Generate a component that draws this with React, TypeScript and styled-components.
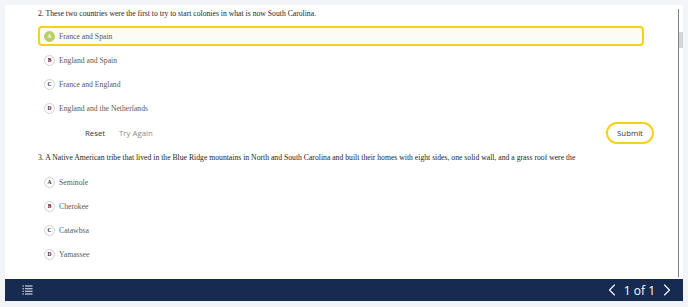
import React, { FC } from 'react';
import styled, { createGlobalStyle } from 'styled-components';
import { ChevronLeft, ChevronRight } from 'lucide-react';

const GlobalStyle = createGlobalStyle`
  html, body {
    margin: 0;
    padding: 0;
    background: #f3f4f7;
  }
`;

const Page = styled.div`
  width: 688px;
  height: 307px;
  box-sizing: border-box;
  padding: 5px 5px 6px 5px;
  display: flex;
  flex-direction: column;
`;

const Card = styled.div`
  flex: 1;
  display: flex;
  background: #ffffff;
  overflow: hidden;
`;

const Content = styled.div`
  flex: 1;
  padding: 3px 34px 0 33px;
  display: flex;
  flex-direction: column;
  font-family: 'Liberation Serif', 'Times New Roman', serif;
`;

const ScrollTrack = styled.div`
  width: 4px;
  margin: 4px 0 2px 0;
  border-left: 1px solid #808080;
  display: flex;
  flex-direction: column;
`;

const ScrollThumb = styled.div`
  margin-top: 23px;
  height: 16px;
  background: #d6d6d6;
`;

const QuestionText = styled.div<{ $gap: number }>`
  height: 12px;
  line-height: 12px;
  font-size: 7.7px;
  color: #1e1e1e;
  white-space: nowrap;
  margin-bottom: ${(p) => p.$gap}px;
`;

const OptionList = styled.div`
  display: flex;
  flex-direction: column;
  gap: 4px;
`;

const OptionRow = styled.div<{ $selected?: boolean }>`
  height: 20px;
  box-sizing: border-box;
  display: flex;
  align-items: center;
  gap: 4px;
  padding-left: ${(p) => (p.$selected ? '4px' : '6px')};
  border: ${(p) => (p.$selected ? '2px solid #f6d11a' : 'none')};
  border-radius: 4px;
  background: ${(p) => (p.$selected ? '#fcfcf4' : 'transparent')};
`;

const Letter = styled.span<{ $selected?: boolean }>`
  width: 11px;
  height: 11px;
  box-sizing: border-box;
  border-radius: 50%;
  display: flex;
  align-items: center;
  justify-content: center;
  font-size: 5.5px;
  font-weight: bold;
  color: ${(p) => (p.$selected ? '#ffffff' : '#222')};
  background: ${(p) => (p.$selected ? '#bad065' : '#fff')};
  border: 1px solid ${(p) => (p.$selected ? '#bad065' : '#cfcfcf')};
`;

const OptionText = styled.span`
  font-size: 7.7px;
  color: #5a5a5a;
`;

const Actions = styled.div`
  height: 22px;
  margin: 4px -10px 8px 0;
  padding-left: 47px;
  display: flex;
  align-items: center;
  gap: 14px;
  font-family: 'Open Sans', 'Liberation Sans', sans-serif;
  font-size: 7.8px;
`;

const LinkButton = styled.span<{ $muted?: boolean }>`
  color: ${(p) => (p.$muted ? '#8a8a8a' : '#333')};
`;

const SubmitButton = styled.div`
  margin-left: auto;
  width: 48px;
  height: 22px;
  box-sizing: border-box;
  border: 2px solid #f6d11a;
  border-radius: 11px;
  display: flex;
  align-items: center;
  justify-content: center;
  color: #333;
`;

const Footer = styled.div`
  height: 22px;
  background: #172b51;
  display: flex;
  align-items: center;
  justify-content: space-between;
  padding: 0 6px 0 17px;
`;

const Pager = styled.div`
  display: flex;
  align-items: center;
  gap: 2px;
  color: #fff;
  font-family: 'Open Sans', 'Liberation Sans', sans-serif;
  font-size: 12px;
`;

const ListIcon: FC = () => (
  <svg width="11" height="10" viewBox="0 0 11 10" fill="none">
    {[1, 3.7, 6.3, 9].map((y) => (
      <g key={y}>
        <rect x="0.5" y={y - 0.6} width="1.4" height="1.2" fill="#c7cfdc" />
        <rect x="3" y={y - 0.6} width="7.5" height="1.2" fill="#c7cfdc" />
      </g>
    ))}
  </svg>
);

interface IQuestion {
  text: string;
  options: string[];
  selected?: number;
  gap: number;
}

const Question: FC<IQuestion> = ({ text, options, selected, gap }) => (
  <>
    <QuestionText $gap={gap}>{text}</QuestionText>
    <OptionList>
      {options.map((o, i) => (
        <OptionRow key={o} $selected={selected === i}>
          <Letter $selected={selected === i}>{'ABCD'[i]}</Letter>
          <OptionText>{o}</OptionText>
        </OptionRow>
      ))}
    </OptionList>
  </>
);

export default function App() {
  return (
    <Page>
      <GlobalStyle />
      <Card>
        <Content>
          <Question
            gap={6}
            selected={0}
            text="2. These two countries were the first to try to start colonies in what is now South Carolina."
            options={['France and Spain', 'England and Spain', 'France and England', 'England and the Netherlands']}
          />
          <Actions>
            <LinkButton>Reset</LinkButton>
            <LinkButton $muted>Try Again</LinkButton>
            <SubmitButton>Submit</SubmitButton>
          </Actions>
          <Question
            gap={8}
            text="3. A Native American tribe that lived in the Blue Ridge mountains in North and South Carolina and built their homes with eight sides, one solid wall, and a grass roof were the"
            options={['Seminole', 'Cherokee', 'Catawbsa', 'Yamassee']}
          />
        </Content>
        <ScrollTrack>
          <ScrollThumb />
        </ScrollTrack>
      </Card>
      <Footer>
        <ListIcon />
        <Pager>
          <ChevronLeft size={20} strokeWidth={1.3} />
          <span>1 of 1</span>
          <ChevronRight size={20} strokeWidth={1.3} />
        </Pager>
      </Footer>
    </Page>
  );
}
